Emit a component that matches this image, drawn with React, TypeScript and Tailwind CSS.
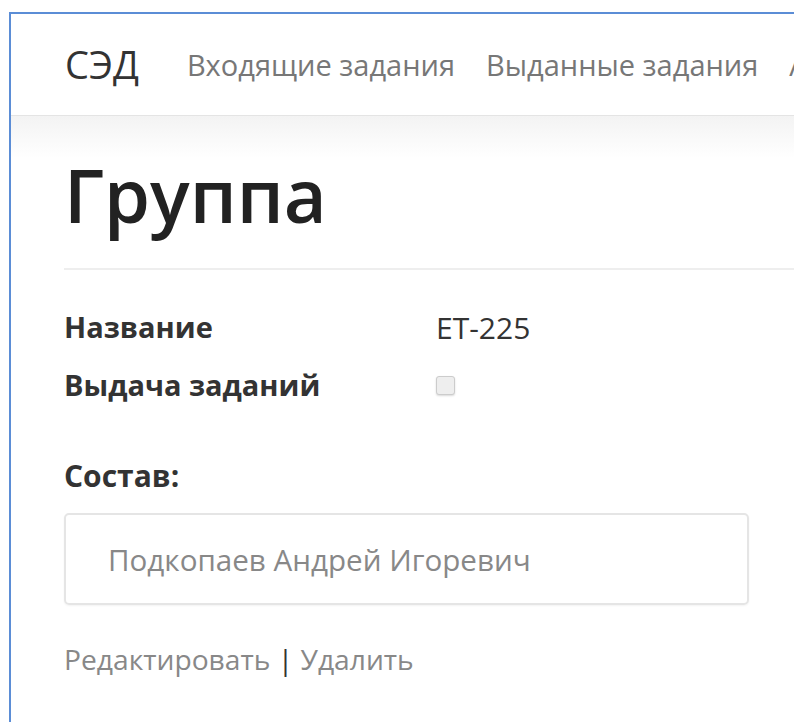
const members = ["Подкопаев Андрей Игоревич"];

function NavBar() {
  return (
    <nav className="flex h-[102px] items-center gap-[48px] overflow-hidden border-b border-[#e4e4e4] pl-[54px] whitespace-nowrap">
      <span className="text-[38px] text-[#333]">СЭД</span>
      <div className="flex items-center gap-[31px] text-[29px] text-[#777]">
        <a>Входящие задания</a>
        <a>Выданные задания</a>
        <a>Администрирование</a>
      </div>
    </nav>
  );
}

function InfoRow({ label, children }: { label: string; children: React.ReactNode }) {
  return (
    <div className="flex h-[58px] items-center">
      <div className="w-[372px] text-[29px] font-bold text-[#333]">{label}</div>
      <div className="text-[30px] text-[#333]">{children}</div>
    </div>
  );
}

export default function App() {
  return (
    <div
      className="h-[722px] w-[794px] overflow-hidden bg-white pl-[9px] pt-[12px]"
      style={{ fontFamily: '"Open Sans", "Noto Sans", sans-serif' }}
    >
      <div className="h-full border-l-2 border-t-2 border-[#5b8dd6]">
        <NavBar />
        <div className="h-[42px] bg-gradient-to-b from-[#f3f3f3] to-white" />

        <main className="pl-[53px]">
          <h1 className="text-[74px] font-semibold leading-none text-[#222]">Группа</h1>
          <hr className="mt-[36px] border-t-2 border-[#eee]" />

          <div className="mt-[28px]">
            <InfoRow label="Название">ET-225</InfoRow>
            <InfoRow label="Выдача заданий">
              <span className="block h-[19px] w-[19px] rounded-[3px] border border-[#ccc] bg-[#eee] shadow-[0_1px_2px_rgba(0,0,0,0.15)]" />
            </InfoRow>
          </div>

          <h4 className="mt-[39px] text-[30px] font-bold text-[#333]">Состав:</h4>

          <ul className="mt-[15px] w-[685px] rounded-[5px] border-2 border-[#e5e5e5] shadow-[0_1px_2px_rgba(0,0,0,0.05)]">
            {members.map((m) => (
              <li key={m} className="flex h-[88px] items-center pl-[42px] pt-[2px] text-[29.6px] text-[#888]">
                {m}
              </li>
            ))}
          </ul>

          <p className="mt-[33px] text-[28.2px] text-[#888]">
            <a>Редактировать</a> <span className="text-[#333]">|</span> <a>Удалить</a>
          </p>
        </main>
      </div>
    </div>
  );
}
